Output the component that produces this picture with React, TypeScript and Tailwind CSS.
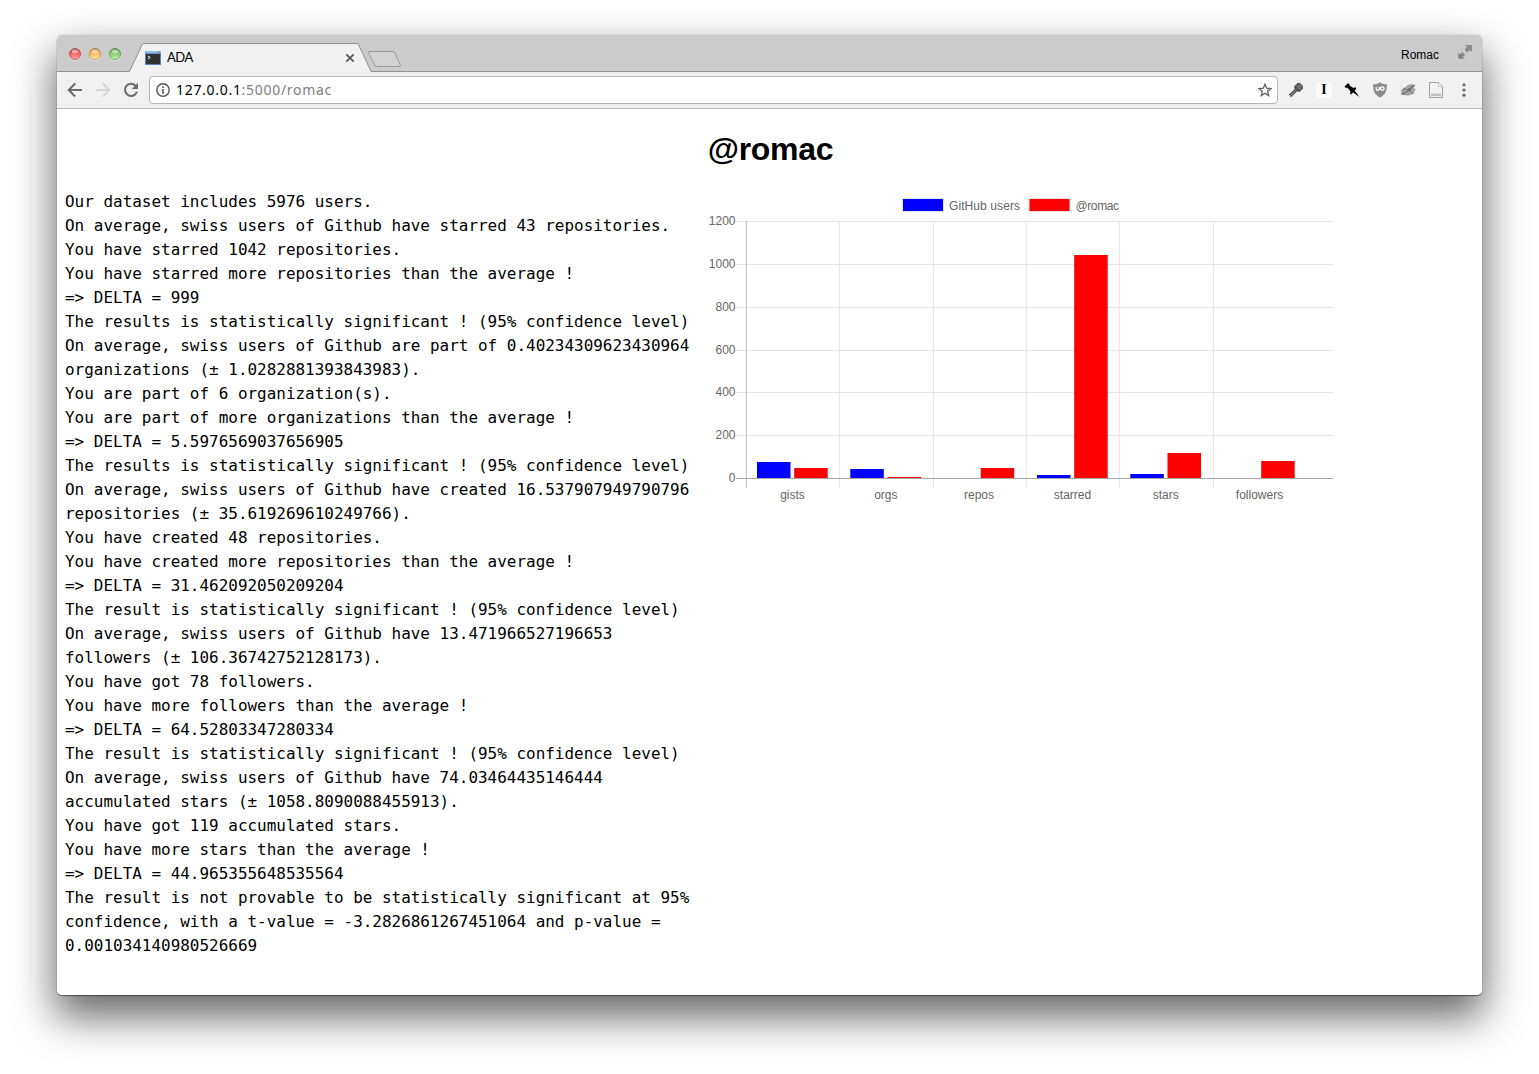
const lines = [
  'Our dataset includes 5976 users.',
  'On average, swiss users of Github have starred 43 repositories.',
  'You have starred 1042 repositories.',
  'You have starred more repositories than the average !',
  '=> DELTA = 999',
  'The results is statistically significant ! (95% confidence level)',
  'On average, swiss users of Github are part of 0.40234309623430964',
  'organizations (± 1.0282881393843983).',
  'You are part of 6 organization(s).',
  'You are part of more organizations than the average !',
  '=> DELTA = 5.5976569037656905',
  'The results is statistically significant ! (95% confidence level)',
  'On average, swiss users of Github have created 16.537907949790796',
  'repositories (± 35.619269610249766).',
  'You have created 48 repositories.',
  'You have created more repositories than the average !',
  '=> DELTA = 31.462092050209204',
  'The result is statistically significant ! (95% confidence level)',
  'On average, swiss users of Github have 13.471966527196653',
  'followers (± 106.36742752128173).',
  'You have got 78 followers.',
  'You have more followers than the average !',
  '=> DELTA = 64.52803347280334',
  'The result is statistically significant ! (95% confidence level)',
  'On average, swiss users of Github have 74.03464435146444',
  'accumulated stars (± 1058.8090088455913).',
  'You have got 119 accumulated stars.',
  'You have more stars than the average !',
  '=> DELTA = 44.965355648535564',
  'The result is not provable to be statistically significant at 95%',
  'confidence, with a t-value = -3.2826861267451064 and p-value =',
  '0.001034140980526669',
];

function TrafficLight({ id, dark, mid, light }: { id: string; dark: string; mid: string; light: string }) {
  return (
    <svg width="14" height="15" viewBox="0 0 14 15">
      <defs>
        <linearGradient id={id} x1="0" y1="0" x2="0" y2="1">
          <stop offset="0" stopColor={dark} />
          <stop offset="0.3" stopColor={mid} />
          <stop offset="1" stopColor={light} />
        </linearGradient>
      </defs>
      <circle cx="7" cy="8" r="6" fill="#fff" opacity=".5" />
      <circle cx="7" cy="7" r="5.6" fill={`url(#${id})`} stroke={dark} strokeWidth=".8" strokeOpacity=".8" />
      <ellipse cx="7" cy="4.6" rx="3.3" ry="2" fill="#fff" opacity=".5" />
    </svg>
  );
}

function TabStrip() {
  return (
    <div className="relative flex h-[37px] bg-[#cbcbcb] text-[12px] text-black">
      <svg className="absolute left-0 top-0" width="1425" height="37" viewBox="0 0 1425 37">
        <path d="M0 36.5H72.5L85 10Q85.500 8.500 87 8.500H299Q301 8.500 301.800 10L314 36.500H1425V38H0Z" fill="#f1f1f1" />
        <path d="M0 36.500H72.500L85 10Q85.500 8.500 87 8.500H299Q301 8.500 301.800 10L314 36.500H1425" fill="none" stroke="#919191" />
        <path d="M313 16.500H336Q337.500 16.500 338 18L343.300 30Q344 31.500 342 31.500H319.500Q318 31.500 317.400 30L311.500 17.800Q311 16.500 313 16.500Z" fill="#d2d2d2" stroke="#999" />
        <path d="M289.300 19.300L296.700 26.700M296.700 19.300L289.300 26.700" stroke="#5a5a5a" strokeWidth="1.800" />
      </svg>
      <div className="relative flex w-full items-start">
        <div className="ml-[11px] mt-3 flex gap-1.5">
          <TrafficLight id="red" dark="#a33b3e" mid="#ee4a4d" light="#ffaaa6" />
          <TrafficLight id="amber" dark="#a8743a" mid="#f2a950" light="#ffee9c" />
          <TrafficLight id="green" dark="#4b7f3b" mid="#76bd60" light="#c9f5ab" />
        </div>
        <svg className="ml-[23px] mt-4" width="16" height="14" viewBox="0 0 16 14">
          <rect width="16" height="14" fill="#5b83b8" />
          <rect x="1" y="3" width="14" height="10" fill="#303234" />
          <rect x="0" y="0" width="16" height="2.300" fill="#8dbdeb" />
          <circle cx="13.500" cy="1.200" r=".8" fill="#e54735" />
          <path d="M3 5L5.200 6.500L3 8" fill="none" stroke="#fff" />
        </svg>
        <span className="ml-[6px] mt-[13px] w-[60px] font-['Lato'] text-[13px] leading-[18px] tracking-[-0.500px]">ADA</span>
        <span className="ml-auto mt-[11px] font-['Liberation_Sans'] text-[12px] leading-[18px]">Romac</span>
        <svg className="ml-[18px] mr-[9px] mt-[9px]" width="16" height="16" viewBox="0 0 16 16" fill="#858585">
          <path d="M8 1H15V8L12.900 5.900L10.200 8.600L7.400 5.800L10.100 3.100Z" opacity=".9" />
          <path d="M1 8L3 10L5.300 7.700L8.300 10.700L6 13L8 15H1Z" stroke="#cbcbcb" strokeWidth=".6" />
        </svg>
      </div>
    </div>
  );
}

function Toolbar() {
  return (
    <div className="flex h-[37px] items-center border-b border-[#b6b6b6] bg-[#f1f1f1]">
      <svg className="ml-[10px]" width="16" height="16" viewBox="0 0 16 16" fill="none" stroke="#6b6b6b" strokeWidth="2">
        <path d="M15 8H2M8.200 1.500L1.700 8L8.200 14.500" />
      </svg>
      <svg className="ml-3" width="16" height="16" viewBox="0 0 16 16" fill="none" stroke="#d6d6d6" strokeWidth="2">
        <path d="M1 8H14M7.800 1.500L14.300 8L7.800 14.500" />
      </svg>
      <svg className="ml-3" width="16" height="16" viewBox="0 0 16 16">
        <path d="M12.700 3.800A6.100 6.100 0 1 0 13.900 9.700" fill="none" stroke="#6b6b6b" strokeWidth="2" />
        <path d="M15 0.800V7H8.800Z" fill="#6b6b6b" />
      </svg>
      <div className="ml-[10px] flex h-[28px] w-[1129px] items-center rounded-[4px] border border-[#b5b5b5] bg-white">
        <svg className="ml-[6px]" width="14" height="14" viewBox="0 0 14 14">
          <circle cx="7" cy="7" r="6.200" fill="none" stroke="#555" strokeWidth="1.400" />
          <path d="M6.200 3.300H7.800V4.900H6.200ZM6.200 6.100H7.800V10.800H6.200Z" fill="#555" />
        </svg>
        <span className="ml-[6px] whitespace-pre font-['Noto_Sans'] text-[14px] leading-[20px] tracking-[0.700px] text-black">127.0.0.1<span className="text-[#808080]">:5000/romac</span></span>
        <svg className="ml-auto mr-[5px]" width="14" height="14" viewBox="0 0 14 14" fill="none" stroke="#5e5e5e" strokeWidth="1.300">
          <path d="M7 1.200L8.700 5.200L13 5.500L9.700 8.300L10.700 12.600L7 10.300L3.300 12.600L4.300 8.300L1 5.500L5.300 5.200Z" />
        </svg>
      </div>
      <div className="ml-[10px] flex gap-3">
        <svg width="16" height="16" viewBox="0 0 16 16">
          <path d="M2 14L8.500 7.500" stroke="#555" strokeWidth="3.200" />
          <path d="M2 14L8.500 7.500" stroke="#8c8c8c" strokeWidth="1" />
          <path d="M6 4.500L9.500 1H12L15 4V6.500L11.500 10L9.500 9.500L6.500 6.500Z" fill="#555" />
          <path d="M9 3.600L12.400 7M11.300 2.700L13.500 4.900" stroke="#a8a8a8" />
        </svg>
        <div className="flex size-4 items-center justify-center bg-[#fafafa] font-['Liberation_Serif'] text-[14px] font-bold leading-4">I</div>
        <svg width="16" height="16" viewBox="0 0 16 16">
          <path d="M0.500 4.500L4 1.200L5.500 2V3.500L9.300 6L11.500 5.300L12.300 6.200L10.800 8.800L15.500 15L9 10.600L7 12.500L6 11.500L6.500 9.500L3.500 5.800H1.500Z" fill="#000" />
        </svg>
        <svg width="16" height="16" viewBox="0 0 16 16">
          <path d="M8 0.500Q11 2.500 15 2.500C15 9 13 13 8 15.500C3 13 1 9 1 2.500Q5 2.500 8 0.500Z" fill="#8b8b8b" />
          <path d="M4.200 5V6.700Q4.200 8.300 5.700 8.300T7.200 6.700V5" fill="none" stroke="#fff" strokeWidth="1.300" />
          <circle cx="10.300" cy="6.600" r="1.800" fill="none" stroke="#fff" strokeWidth="1.300" />
        </svg>
        <svg width="16" height="16" viewBox="0 0 16 16">
          <path d="M0.500 9L3 6L6 5L7.500 3L12 2L15 3.500L13.500 5.500L15.500 7.500L13.500 12L9 13.500L2.500 13L0.500 12L2 10.500Z" fill="#a0a0a0" />
          <path d="M2 12.300L7.500 9L14.500 3M4 7.500L9 7L12 11" fill="none" stroke="#6c6c6c" strokeWidth="1.300" />
          <path d="M4.500 10L8 5.500M9.500 11.500L14 7.500" stroke="#cfcfcf" strokeWidth=".8" />
        </svg>
        <svg width="16" height="16" viewBox="0 0 16 16">
          <path d="M1.500 0.500H10.500L14.500 4.500V15.500H1.500Z" fill="#f0f0f0" stroke="#a0a0a0" />
          <path d="M10.500 0.500V4.500H14.500Z" fill="#fff" stroke="#b5b5b5" strokeWidth=".8" />
          <path d="M3 11.500H13V14H3Z" fill="#c0c0c0" />
        </svg>
        <svg width="16" height="16" viewBox="0 0 16 16" fill="#6b6b6b">
          <circle cx="8" cy="2.800" r="1.600" /><circle cx="8" cy="8" r="1.600" /><circle cx="8" cy="13.200" r="1.600" />
        </svg>
      </div>
    </div>
  );
}

const ticks = [
  { label: '1200', y: 221.5 }, { label: '1000', y: 264.5 }, { label: '800', y: 307.5 },
  { label: '600', y: 350.5 }, { label: '400', y: 392.5 }, { label: '200', y: 435.5 }, { label: '0', y: 478.5 },
];
const groups = [
  { label: 'gists', grid: 746, x: 792.5, blue: 462, red: 468 },
  { label: 'orgs', grid: 839, x: 885.8, blue: 469, red: 477 },
  { label: 'repos', grid: 933, x: 979, blue: 478, red: 468 },
  { label: 'starred', grid: 1026, x: 1072.5, blue: 475, red: 255 },
  { label: 'stars', grid: 1119, x: 1165.8, blue: 474, red: 453 },
  { label: 'followers', grid: 1213, x: 1259.5, blue: 478, red: 461 },
];

function Chart() {
  return (
    <svg width="640" height="320" viewBox="700 189 640 320" className="font-['Liberation_Sans'] text-[12px]" fill="#666">
      <rect x="902" y="198" width="42" height="14" fill="#e5e5e5" />
      <rect x="903" y="199" width="40" height="12" fill="#00f" />
      <text x="949" y="210" textLength="71">GitHub users</text>
      <rect x="1028.500" y="198" width="42" height="14" fill="#e5e5e5" />
      <rect x="1029.500" y="199" width="40" height="12" fill="#f00" />
      <text x="1075.500" y="210" textLength="43.500">@romac</text>
      {ticks.map((t) => (
        <g key={t.label}>
          <path d={`M736 ${t.y}H1333`} stroke="#e5e5e5" />
          <text x="735.500" y={t.y + 3.5} textAnchor="end">{t.label}</text>
        </g>
      ))}
      {groups.map((g, i) => (
        <g key={g.label}>
          <path d={`M${g.grid + 0.3} 221V488`} stroke={i ? '#e5e5e5' : '#bdbdbd'} />
          <rect x={g.x - 35.5} y={g.blue} width="33.500" height={478 - g.blue} fill="#00f" />
          <rect x={g.x + 1.7} y={g.red} width="33.500" height={478 - g.red} fill="#f00" />
          <text x={g.x} y="499" textAnchor="middle">{g.label}</text>
        </g>
      ))}
      <path d="M736 478.500H1333" stroke="#a8a8a8" />
    </svg>
  );
}

export default function App() {
  return (
    <div className="h-[1074px] w-[1539px] overflow-hidden bg-white pl-[57px] pt-[35px]">
      <div className="h-[960px] w-[1425px] rounded-[5px] shadow-[0_1px_1px_0_rgba(0,0,0,0.450),0_0_1px_0_rgba(0,0,0,0.400),0_20px_42px_2px_rgba(0,0,0,0.600)]">
        <div className="h-full overflow-hidden rounded-[5px] bg-white">
          <TabStrip />
          <Toolbar />
          <main className="px-2 pt-5 text-black">
            <h1 className="pl-[2px] text-center font-['Liberation_Sans'] text-[32px] font-bold leading-[40px] tracking-[-0.300px]">@romac</h1>
            <div className="mt-5 flex">
              <div className="w-[635px] whitespace-pre pt-px font-['DejaVu_Sans_Mono'] text-[15.960px] leading-6">
                {lines.map((line, i) => <div key={i}>{line}</div>)}
              </div>
              <Chart />
            </div>
          </main>
        </div>
      </div>
    </div>
  );
}
